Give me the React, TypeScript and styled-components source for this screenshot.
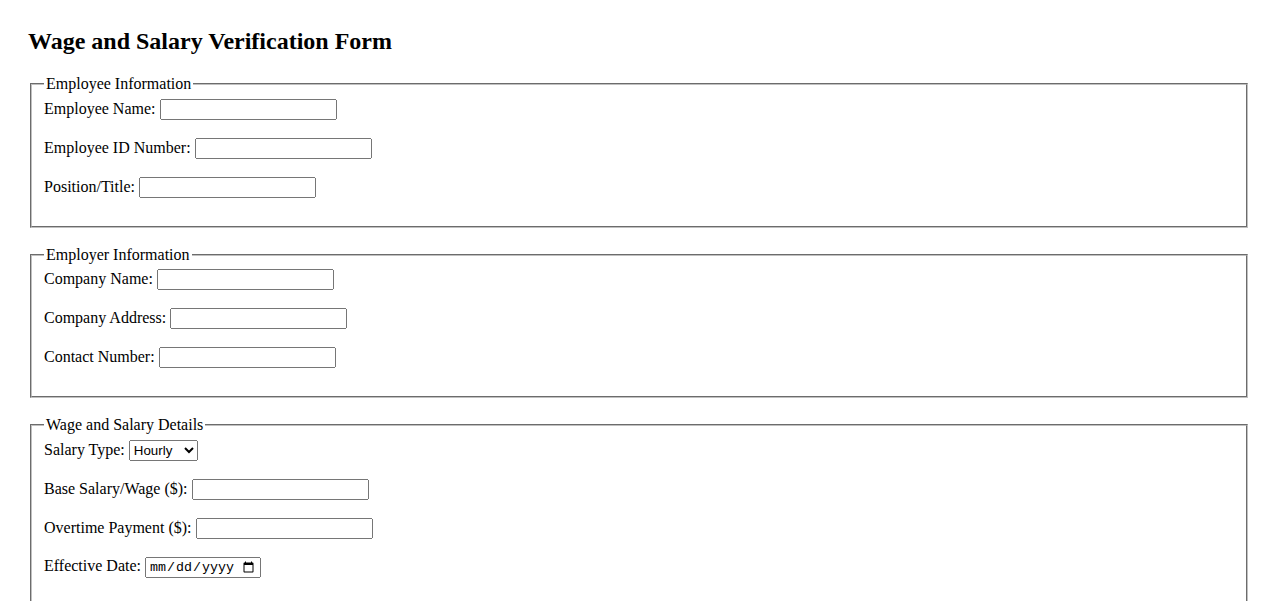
import React from "react";
import styled, { createGlobalStyle } from "styled-components";

const GlobalStyle = createGlobalStyle`
  html, body {
    margin: 0;
    padding: 0;
    background: #ffffff;
  }
  body {
    font-family: "Liberation Serif", "Times New Roman", serif;
    font-size: 16px;
    color: #000000;
  }
`;

const Page = styled.form`
  padding: 28px 28px 28px 28px;
`;

const Title = styled.h2`
  margin: 0 0 19.92px 0;
  font-size: 24px;
  font-weight: bold;
  line-height: normal;
`;

const Section = styled.fieldset`
  margin: 0 2px 18px 2px;
  padding: 5.6px 12px 10px 12px;
  border: 2px groove rgb(192, 192, 192);
  min-width: min-content;
`;

const Legend = styled.legend`
  padding: 0 2px;
  font-size: 16px;
`;

const Row = styled.div`
  margin-bottom: 18px;
`;

const Label = styled.label`
  font-size: 16px;
`;

const TextInput = styled.input`
  box-sizing: border-box;
  width: ${(p: { $w?: number }) => p.$w ?? 177}px;
  height: 21px;
  font: 13.33px "Liberation Sans", Arial, sans-serif;
  padding: 1px 2px;
  margin: 0;
`;

const DateInput = styled.input`
  box-sizing: border-box;
  width: 116px;
  height: 21px;
  font: 13.33px "Liberation Mono", "Courier New", monospace;
  padding: 1px 2px;
  margin: 0;
`;

const Select = styled.select`
  box-sizing: border-box;
  width: 69px;
  height: 21px;
  font: 13.33px "Liberation Sans", Arial, sans-serif;
  margin: 0;
`;

type Field = { id: string; label: string };

const employee: Field[] = [
  { id: "employeeName", label: "Employee Name:" },
  { id: "employeeId", label: "Employee ID Number:" },
  { id: "position", label: "Position/Title:" },
];

const employer: Field[] = [
  { id: "companyName", label: "Company Name:" },
  { id: "companyAddress", label: "Company Address:" },
  { id: "contactNumber", label: "Contact Number:" },
];

function TextRow({ f }: { f: Field }) {
  return (
    <Row>
      <Label htmlFor={f.id}>{f.label}</Label> <TextInput type="text" id={f.id} name={f.id} />
    </Row>
  );
}

export default function App() {
  return (
    <>
      <GlobalStyle />
      <Page onSubmit={(e) => e.preventDefault()}>
        <Title>Wage and Salary Verification Form</Title>
        <Section>
          <Legend>Employee Information</Legend>
          {employee.map((f) => (
            <TextRow key={f.id} f={f} />
          ))}
        </Section>
        <Section>
          <Legend>Employer Information</Legend>
          {employer.map((f) => (
            <TextRow key={f.id} f={f} />
          ))}
        </Section>
        <Section>
          <Legend>Wage and Salary Details</Legend>
          <Row>
            <Label htmlFor="salaryType">Salary Type:</Label>{" "}
            <Select id="salaryType" name="salaryType" defaultValue="hourly">
              <option value="hourly">Hourly</option>
              <option value="salary">Salary</option>
            </Select>
          </Row>
          <Row>
            <Label htmlFor="baseSalary">Base Salary/Wage ($):</Label>{" "}
            <TextInput type="text" id="baseSalary" name="baseSalary" />
          </Row>
          <Row>
            <Label htmlFor="overtime">Overtime Payment ($):</Label>{" "}
            <TextInput type="text" id="overtime" name="overtime" />
          </Row>
          <Row>
            <Label htmlFor="effectiveDate">Effective Date:</Label>{" "}
            <DateInput type="date" id="effectiveDate" name="effectiveDate" />
          </Row>
        </Section>
      </Page>
    </>
  );
}
